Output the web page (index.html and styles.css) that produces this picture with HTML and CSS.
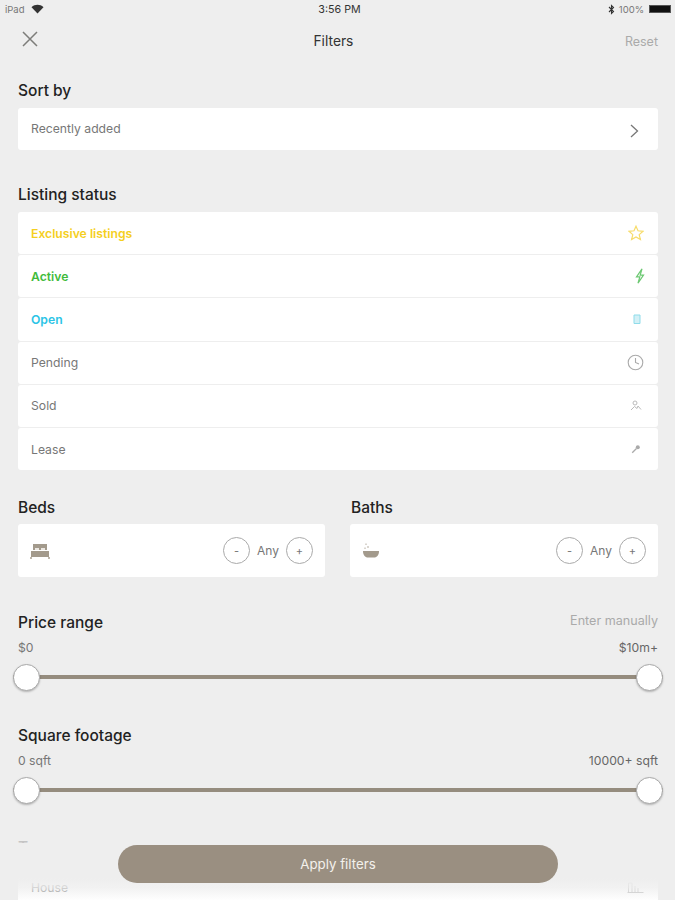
FILE: index.html
```html
<!DOCTYPE html>
<html lang="en">
<head>
    <meta charset="UTF-8">
    <title>Filters</title>
    <link rel="stylesheet" href="styles.css">
</head>
<body>
    <div class="page">
        <div class="status-bar">
            <div class="status-left">
                <span>iPad</span>
                <svg class="wifi" width="13" height="10" viewBox="0 0 13 10"><path d="M6.5 9.5 0.5 3.2C4 0 9 0 12.5 3.2Z" fill="#333"/></svg>
            </div>
            <div class="status-time">3:56 PM</div>
            <div class="status-right">
                <svg width="7" height="11" viewBox="0 0 7 11"><path d="M1 3 5.5 7.5 3.5 9.5V1.5L5.5 3.5 1 8" fill="none" stroke="#333" stroke-width="1.1"/></svg>
                <span>100%</span>
                <div class="battery"><div class="battery-fill"></div></div>
            </div>
        </div>

        <div class="nav-bar">
            <svg class="nav-close" width="16" height="16" viewBox="0 0 16 16"><path d="M1 1 15 15M15 1 1 15" stroke="#7d7d7a" stroke-width="1.5" fill="none"/></svg>
            <div class="nav-title">Filters</div>
            <div class="nav-reset">Reset</div>
        </div>

        <h2 class="section-title title-sort">Sort by</h2>
        <div class="card sort-card">
            <span class="row-label">Recently added</span>
            <svg width="9" height="14" viewBox="0 0 9 14"><path d="M1 1 7.5 7 1 13" stroke="#777" stroke-width="1.3" fill="none"/></svg>
        </div>

        <h2 class="section-title title-status">Listing status</h2>
        <div class="status-list">
            <div class="card status-row">
                <span class="row-label strong yellow">Exclusive listings</span>
                <svg width="16" height="16" viewBox="0 0 16 16"><path d="M8 1.2 10 5.8 15 6.3 11.2 9.6 12.4 14.6 8 12 3.6 14.6 4.8 9.6 1 6.3 6 5.8Z" fill="none" stroke="#f7dc6a" stroke-width="1.2"/></svg>
            </div>
            <div class="card status-row">
                <span class="row-label strong green">Active</span>
                <svg class="icon-active" width="10" height="16" viewBox="0 0 10 16"><path d="M7 .8 1.5 8.800H4.800L3 15.200 8.500 7.200H5.200Z" fill="none" stroke="#6cc872" stroke-width="1.200"/></svg>
            </div>
            <div class="card status-row">
                <span class="row-label strong blue">Open</span>
                <svg class="icon-open" width="8" height="10" viewBox="0 0 8 10"><path d="M1 1H7V9.5H1Z" fill="#d3f0f6" stroke="#8fdcea" stroke-width="1"/></svg>
            </div>
            <div class="card status-row">
                <span class="row-label">Pending</span>
                <svg width="17" height="17" viewBox="0 0 17 17"><circle cx="8.5" cy="8.5" r="7.3" fill="none" stroke="#aaa" stroke-width="1.1"/><path d="M8.5 4V8.5L12 10" fill="none" stroke="#aaa" stroke-width="1.1"/></svg>
            </div>
            <div class="card status-row">
                <span class="row-label">Sold</span>
                <svg class="icon-sold" width="12" height="11" viewBox="0 0 12 11"><circle cx="5" cy="3" r="2" fill="none" stroke="#bbb"/><path d="M1 10 4.5 6.5 7 8.5 8 6 11 9.5" fill="none" stroke="#bbb"/></svg>
            </div>
            <div class="card status-row">
                <span class="row-label">Lease</span>
                <svg class="icon-lease" width="10" height="10" viewBox="0 0 10 10"><circle cx="6.8" cy="3.2" r="2" fill="#aaa"/><path d="M5.5 4.5 1.2 8.8" stroke="#aaa" stroke-width="1.3"/></svg>
            </div>
        </div>

        <div class="rooms">
            <div class="room">
                <h2 class="section-title">Beds</h2>
                <div class="card room-card">
                    <svg width="20" height="16" viewBox="0 0 20 16"><path d="M3 1H17V7H3Z" fill="#a39a8c"/><path d="M5 5H9V7H5ZM11 5H15V7H11Z" fill="#ece8e2"/><path d="M1 8H19V14H1Z" fill="#a39a8c"/><path d="M1 14V16M19 14V16" stroke="#a39a8c" stroke-width="1.4"/></svg>
                    <div class="stepper">
                        <div class="step-btn">-</div>
                        <span class="step-value">Any</span>
                        <div class="step-btn">+</div>
                    </div>
                </div>
            </div>
            <div class="room">
                <h2 class="section-title title-baths">Baths</h2>
                <div class="card room-card">
                    <svg width="18" height="17" viewBox="0 0 18 17"><path d="M1 9H17C17 13 15 15.500 12 15.500H6C3 15.500 1 13 1 9Z" fill="#a39a8c"/><path d="M4 1.500V3M6 4V6M3 5.500V7" stroke="#b5ada1" stroke-width="1"/></svg>
                    <div class="stepper">
                        <div class="step-btn">-</div>
                        <span class="step-value">Any</span>
                        <div class="step-btn">+</div>
                    </div>
                </div>
            </div>
        </div>

        <div class="range range-price">
            <div class="range-head">
                <h2 class="section-title">Price range</h2>
                <span class="enter-link">Enter manually</span>
            </div>
            <div class="range-values"><span>$0</span><span>$10m+</span></div>
            <div class="slider">
                <div class="slider-knob"></div>
                <div class="slider-knob"></div>
            </div>
        </div>

        <div class="range range-sqft">
            <div class="range-head">
                <h2 class="section-title">Square footage</h2>
            </div>
            <div class="range-values"><span>0 sqft</span><span>10000+ sqft</span></div>
            <div class="slider">
                <div class="slider-knob"></div>
                <div class="slider-knob"></div>
            </div>
        </div>

        <h2 class="section-title title-type">Type</h2>
        <div class="card type-row">
            <span class="row-label">House</span>
            <svg width="17" height="12" viewBox="0 0 17 12"><path d="M1.500 11V2H5V11M8 11V5M11 11V7M.5 11.500H16.500" fill="none" stroke="#bbb"/></svg>
        </div>

        <div class="bottom-fade"></div>
        <div class="apply-btn">Apply filters</div>
    </div>
</body>
</html>
```

FILE: styles.css
```css
* {
    box-sizing: border-box;
}
html, body {
    margin: 0;
    padding: 0;
}
body {
    font-family: Inter, "Liberation Sans", sans-serif;
    background-color: #eeeeee;
    color: #222;
}
.page {
    position: relative;
    height: 900px;
    padding: 0 17px 0 18px;
    overflow: hidden;
}

/* status bar */
.status-bar {
    display: flex;
    justify-content: space-between;
    align-items: center;
    height: 18px;
    margin: 0 -13px;
    font-size: 9.5px;
    color: #444;
    position: relative;
}
.status-left, .status-right {
    display: flex;
    align-items: center;
    gap: 6px;
    width: 100px;
}
.status-left {
    color: #777;
}
.status-right {
    justify-content: flex-end;
    gap: 4px;
    color: #777;
}
.status-time {
    font-size: 10.700px;
    color: #333;
    margin-left: 3px;
}
.battery {
    width: 22px;
    height: 8px;
    margin-left: 1px;
}
.battery-fill {
    width: 100%;
    height: 100%;
    background-color: #111;
    border: 1px solid #555;
}

/* nav */
.nav-bar {
    display: flex;
    justify-content: space-between;
    align-items: center;
    height: 44px;
    position: relative;
}
.nav-close {
    margin-left: 4px;
    margin-top: -3px;
}
.nav-title {
    font-size: 13.800px;
    color: #333;
    margin: 2px 0 0 4px;
}
.nav-reset {
    font-size: 12.500px;
    color: #aaa;
    margin-top: 2px;
}

.section-title {
    margin: 0;
    font-size: 15.500px;
    line-height: 18px;
    font-weight: 500;
    color: #222;
}
.title-sort {
    margin-top: 20px;
}
.title-status {
    margin-top: 36px;
}
.title-baths {
    padding-left: 1px;
}
.title-type {
    margin-top: 35px;
    color: #c4c4c4;
}

.card {
    background-color: #fff;
    border-radius: 3px;
    display: flex;
    justify-content: space-between;
    align-items: center;
}
.row-label {
    font-size: 12.200px;
    color: #777;
}
.row-label.strong {
    font-weight: 600;
}
.yellow {
    color: #f5cf1e;
}
.green {
    color: #3fbb3c;
}
.blue {
    color: #2dc4e6;
}

.sort-card {
    height: 42px;
    margin-top: 8px;
    padding: 0 19px 0 13px;
}
.sort-card .row-label {
    margin-top: -2px;
}
.sort-card svg {
    margin-top: 3px;
}

.status-list {
    display: flex;
    flex-direction: column;
    gap: 1px;
    margin-top: 8px;
}
.status-row {
    height: 42.200px;
    padding: 0 14px 0 13px;
}
.icon-active {
    margin-right: -1px;
}
.icon-open {
    margin-right: 3px;
}
.icon-sold {
    margin-right: 2px;
}
.icon-lease {
    margin-right: 3px;
}

.rooms {
    display: grid;
    grid-template-columns: 307px 308px;
    gap: 25px;
    margin-top: 29px;
}
.room-card {
    height: 53px;
    margin-top: 7px;
    padding: 0 12px 0 12px;
}
.stepper {
    display: flex;
    align-items: center;
    gap: 7px;
}
.step-btn {
    width: 27px;
    height: 27px;
    border: 1px solid #aaa;
    border-radius: 50%;
    display: flex;
    align-items: center;
    justify-content: center;
    font-size: 11px;
    color: #777;
}
.step-value {
    font-size: 12px;
    color: #777;
}

.range-price {
    margin-top: 37px;
}
.range-sqft {
    margin-top: 36px;
}
.range-head {
    display: flex;
    justify-content: space-between;
    align-items: center;
    height: 18px;
}
.enter-link {
    font-size: 12.600px;
    color: #aaa;
    margin-top: -6px;
}
.range-values {
    display: flex;
    justify-content: space-between;
    margin-top: 9px;
    font-size: 12.200px;
    line-height: 14px;
    color: #777;
}
.range-values span:last-child {
    color: #666;
}
.slider {
    display: flex;
    justify-content: space-between;
    align-items: center;
    height: 28px;
    margin: 8px -5px 0 -5px;
    background: linear-gradient(#958c7e, #958c7e) center / 100% 4px no-repeat;
}
.slider-knob {
    width: 27px;
    height: 27px;
    border-radius: 50%;
    background-color: #fff;
    border: 1px solid #aaa;
    box-shadow: 0 1px 2px rgba(0,0,0,0.25);
}

.type-row {
    height: 42px;
    margin-top: 9px;
    padding: 0 14px 0 13px;
}

/* overlay at the bottom */
.bottom-fade {
    position: absolute;
    left: 0;
    right: 0;
    top: 843px;
    bottom: 0;
    background: linear-gradient(rgba(238,238,238,1) 62%, rgba(238,238,238,0.8) 78%, rgba(238,238,238,0.05) 100%);
}
.apply-btn {
    position: absolute;
    left: 118px;
    top: 845px;
    width: 440px;
    height: 38px;
    border-radius: 19px;
    background-color: #9a8f81;
    color: #f4f1ec;
    font-size: 13.300px;
    display: flex;
    align-items: center;
    justify-content: center;
}
```
